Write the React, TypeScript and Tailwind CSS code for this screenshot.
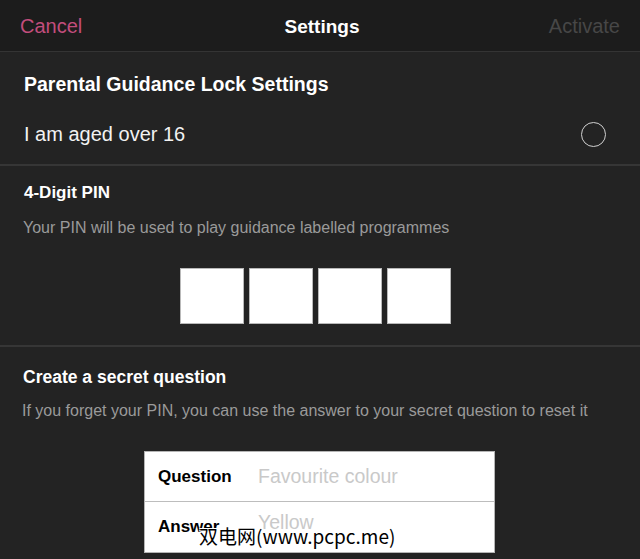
export default function App() {
  const pins = [0, 1, 2, 3];

  return (
    <div
      className="relative w-[640px] h-[559px] overflow-hidden bg-[#232323] text-white"
      style={{ fontFamily: '"Liberation Sans", Arial, sans-serif' }}
    >
      {/* top bar */}
      <div className="grid h-[52px] grid-cols-3 items-center border-b border-[#343434] bg-[#1c1c1c] px-[20px]">
        <span className="text-[20px] text-[#c24d7c]">Cancel</span>
        <span className="pt-[3px] pl-[4px] text-center text-[19px] font-bold text-white">Settings</span>
        <span className="text-right text-[20px] text-[#474747]">Activate</span>
      </div>

      {/* parental lock */}
      <div className="border-b-2 border-[#363636] px-[24px] pt-[21px] pb-[18px]">
        <h1 className="text-[19.5px] leading-[22px] font-bold">Parental Guidance Lock Settings</h1>
        <div className="mt-[27px] flex h-[24px] items-center justify-between">
          <span className="text-[20px] text-[#f2f2f2]">I am aged over 16</span>
          <span className="mr-[10px] h-[25px] w-[25px] rounded-full border-[1.5px] border-[#d0d0d0]" />
        </div>
      </div>

      {/* pin */}
      <div className="border-b-2 border-[#363636] px-[24px] pt-[17px] pb-[21px]">
        <h2 className="text-[17px] leading-[20px] font-bold">4-Digit PIN</h2>
        <p className="-ml-px mt-[16px] text-[16px] leading-[18px] text-[#9a9a9a]">
          Your PIN will be used to play guidance labelled programmes
        </p>
        <div className="mt-[31px] flex justify-center gap-[5px] pr-[10px]">
          {pins.map((p) => (
            <div key={p} className="h-[56px] w-[64px] border border-[#b9b9b9] bg-white" />
          ))}
        </div>
      </div>

      {/* secret question */}
      <div className="px-[22px] pt-[20px]">
        <h2 className="ml-px text-[17.5px] leading-[20px] font-bold">Create a secret question</h2>
        <p className="mt-[15px] text-[16px] leading-[18px] text-[#9a9a9a]">
          If you forget your PIN, you can use the answer to your secret question to reset it
        </p>
        <div className="ml-[122px] mt-[31px] w-[351px] border border-[#b5b5b5] bg-white">
          <div className="flex h-[50px] items-center border-b border-[#bdbdbd] pl-[13px]">
            <span className="w-[100px] text-[17px] font-bold text-black">Question</span>
            <span className="text-[19.5px] text-[#c9c9c9]">Favourite colour</span>
          </div>
          <div className="flex h-[50px] items-center pl-[13px]">
            <span className="w-[100px] text-[17px] font-bold text-black">Answer</span>
            <span className="-mt-[8px] text-[19.5px] text-[#c9c9c9]">Yellow</span>
          </div>
        </div>
      </div>

      {/* watermark */}
      <div
        className="absolute left-[199px] top-[522px] text-[19px] text-black"
        style={{
          fontFamily: '"Noto Sans CJK SC", "Liberation Sans", sans-serif',
          textShadow: "1px 1px 0 #fff, -1px -1px 0 #fff, 1px -1px 0 #fff, -1px 1px 0 #fff",
        }}
      >
        双电网(www.pcpc.me)
      </div>
    </div>
  );
}
